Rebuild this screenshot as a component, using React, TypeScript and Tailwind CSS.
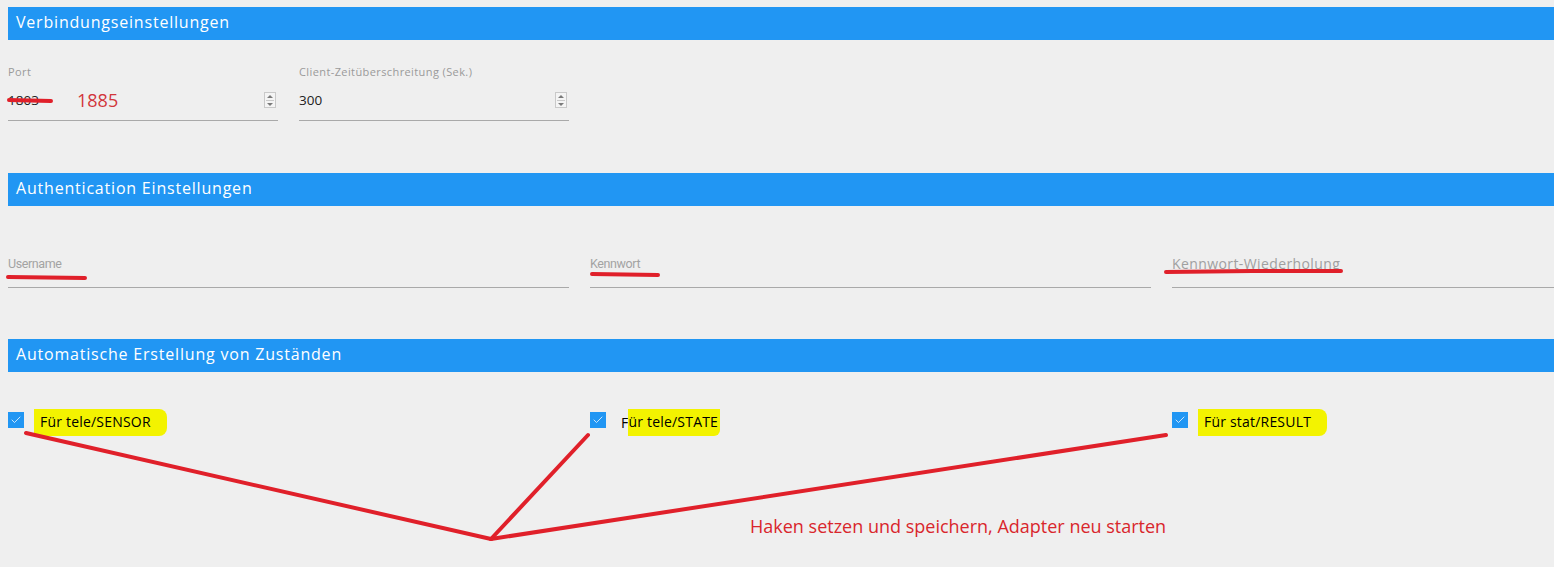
import { Check } from 'lucide-react'

const sans = 'font-["Open_Sans","Liberation_Sans",sans-serif]'

function Header({ title }: { title: string }) {
  return (
    <div className={`h-[33px] bg-[#2196f3] flex items-center pl-2 pb-[3px] text-white text-[16px] tracking-[0.8px] ${sans}`}>
      {title}
    </div>
  )
}

function Spinner() {
  return (
    <div className="w-[12px] h-[16px] border border-[#c9c9c9] bg-[#f4f4f4] flex flex-col items-center justify-center gap-[2px]">
      <div className="w-0 h-0 border-l-[3px] border-r-[3px] border-b-[3px] border-l-transparent border-r-transparent border-b-[#7a7a7a]" />
      <div className="w-[8px] h-px bg-[#c9c9c9]" />
      <div className="w-0 h-0 border-l-[3px] border-r-[3px] border-t-[3px] border-l-transparent border-r-transparent border-t-[#7a7a7a]" />
    </div>
  )
}

function NumField({ label, children }: { label: string; children: React.ReactNode }) {
  return (
    <div className="w-[270px]">
      <div className={`h-[12px] leading-[12px] text-[11px] tracking-[0.4px] text-[#9a9a9a] ${sans}`}>{label}</div>
      <div className="mt-[12px] h-[20px] flex items-center justify-between pr-[2px]">
        <div className={`flex items-center text-[13.5px] text-[#222] ${sans}`}>{children}</div>
        <Spinner />
      </div>
      <div className="mt-[10px] border-b border-[#a9a9a9]" />
    </div>
  )
}

function TextField({ label, wide }: { label: string; wide?: boolean }) {
  return (
    <div className="w-[561px] shrink-0">
      <div
        className={
          wide
            ? `h-[16px] leading-[16px] text-[14px] tracking-[0.4px] text-[#a0a0a0] ${sans}`
            : 'h-[16px] leading-[16px] text-[12.5px] text-[#a3a3a3] tracking-[-0.4px] font-["Roboto",sans-serif]'
        }
      >
        {label}
      </div>
      <div className="mt-[15px] border-b border-[#a9a9a9]" />
    </div>
  )
}

function CheckItem({ pre, hl }: { pre?: string; hl: string }) {
  return (
    <div className="w-[561px] shrink-0 h-[16px] flex items-center">
      <div className="w-[16px] h-[16px] bg-[#2196f3] flex items-center justify-center shrink-0">
        <Check className="w-[12px] h-[12px] text-white" strokeWidth={1.5} />
      </div>
      <div className={`ml-[10px] text-[14px] tracking-[0.2px] text-black ${sans} flex items-center mt-[4px]`}>
        {pre && <span className="pl-[5px]">{pre}</span>}
        <span className={`bg-[#f3f300] pt-[2px] pb-[4px] ${pre ? 'pr-[2px] rounded-br-[6px]' : 'pl-[6px] pr-[16px] rounded-r-[8px]'}`}>
          {hl}
        </span>
      </div>
    </div>
  )
}

export default function App() {
  return (
    <div className="relative w-full h-[567px] bg-[#efefef] overflow-hidden">
      <div className="w-[1760px] pl-2 pt-[7px]">
        <Header title="Verbindungseinstellungen" />
        <div className="mt-[26px] flex gap-[21px]">
          <NumField label="Port">
            <span className="w-[69px]">1803</span>
            <span className={`text-[18px] text-[#d2363b] ${sans}`}>1885</span>
          </NumField>
          <NumField label="Client-Zeitüberschreitung (Sek.)">
            <span>300</span>
          </NumField>
        </div>

        <div className="mt-[52px]">
          <Header title="Authentication Einstellungen" />
        </div>
        <div className="mt-[50px] flex gap-[21px]">
          <TextField label="Username" />
          <TextField label="Kennwort" />
          <TextField label="Kennwort-Wiederholung" wide />
        </div>

        <div className="mt-[51px]">
          <Header title="Automatische Erstellung von Zuständen" />
        </div>
        <div className="mt-[40px] flex gap-[21px]">
          <CheckItem hl="Für tele/SENSOR" />
          <CheckItem pre="F" hl="ür tele/STATE" />
          <CheckItem hl="Für stat/RESULT" />
        </div>

        <div className={`mt-[86px] ml-[742px] text-[18px] leading-[24px] text-[#d9262c] ${sans}`}>
          Haken setzen und speichern, Adapter neu starten
        </div>
      </div>

      {/* red annotations */}
      <svg className="absolute inset-0 pointer-events-none" width="1554" height="567" viewBox="0 0 1554 567">
        <g stroke="#e0202a" strokeWidth="4" strokeLinecap="round" fill="none">
          <line x1="9" y1="100" x2="51" y2="101" />
          <line x1="8" y1="277" x2="85" y2="278" />
          <line x1="592" y1="274" x2="658" y2="275" />
          <line x1="1166" y1="272" x2="1252" y2="271" />
          <line x1="1252" y1="271" x2="1341" y2="271" />
          <line x1="26" y1="433" x2="491" y2="539" />
          <line x1="491" y1="539" x2="588" y2="435" />
          <line x1="491" y1="539" x2="1166" y2="435" />
        </g>
      </svg>
    </div>
  )
}
